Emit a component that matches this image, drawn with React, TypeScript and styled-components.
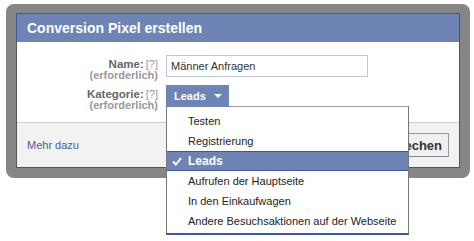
import React from 'react';
import styled, { createGlobalStyle } from 'styled-components';

const Global = createGlobalStyle`
  html, body { margin: 0; padding: 0; background: #fff; }
  body {
    font-family: "Liberation Sans", Arial, sans-serif;
    width: 474px;
    height: 241px;
    overflow: hidden;
  }
`;

const Page = styled.div`
  padding: 4px 0 0 6px;
`;

const Frame = styled.div`
  width: 464px;
  box-sizing: border-box;
  padding: 9px 10px 10px 10px;
  background: #868686;
  border-radius: 8px;
`;

const Dialog = styled.div`
  background: #fff;
  border: 1px solid #555;
  border-top: none;
`;

const Header = styled.div`
  height: 29px;
  box-sizing: border-box;
  background: #6d84b4;
  border: 1px solid #3b5998;
  border-bottom: none;
  margin: 0 -1px;
  padding: 0 0 0 10px;
  display: flex;
  align-items: center;
  color: #fff;
  font-weight: bold;
  font-size: 14px;
`;

const Body = styled.div`
  display: grid;
  grid-template-columns: 141px 1fr;
  column-gap: 8px;
  row-gap: 4px;
  padding: 13px 0 11px 0;
`;

const Label = styled.div`
  text-align: right;
  padding-top: 3px;
`;

const LabelMain = styled.div`
  font-size: 11.5px;
  line-height: 12px;
  font-weight: bold;
  color: #666;
`;

const Help = styled.span`
  font-weight: normal;
  font-size: 11px;
  color: #999;
  margin-left: 2px;
`;

const Required = styled.div`
  font-size: 11px;
  line-height: 11px;
  font-weight: bold;
  color: #999;
`;

const Field = styled.div`
  display: flex;
  align-items: flex-start;
`;

const TextInput = styled.input`
  width: 202px;
  height: 22px;
  box-sizing: border-box;
  border: 1px solid #bdc7d8;
  padding: 0 4px;
  font-family: inherit;
  font-size: 11px;
  color: #333;
  outline: none;
`;

const SelectWrap = styled.div`
  position: relative;
`;

const SelectButton = styled.div`
  position: relative;
  z-index: 2;
  height: 22px;
  box-sizing: border-box;
  width: 63px;
  padding: 0 0 0 8px;
  background: #6d84b4;
  color: #fff;
  font-size: 11px;
  font-weight: bold;
  display: flex;
  align-items: center;
  gap: 8px;
`;

const Arrow = styled.span`
  width: 0;
  height: 0;
  border-left: 4px solid transparent;
  border-right: 4px solid transparent;
  border-top: 4px solid #fff;
`;

const Menu = styled.div`
  position: absolute;
  z-index: 1;
  top: 100%;
  margin-top: -1px;
  left: 0;
  width: 243px;
  box-sizing: border-box;
  background: #fff;
  border: 1px solid #777;
  border-top-color: #999;
  border-bottom: 2px solid #3b5998;
  padding: 4px 0 2px 0;
`;

const Item = styled.div<{ $active?: boolean }>`
  position: relative;
  height: 20px;
  box-sizing: border-box;
  padding-left: 21px;
  display: flex;
  align-items: center;
  font-size: ${(p) => (p.$active ? '12px' : '11px')};
  font-weight: ${(p) => (p.$active ? 'bold' : 'normal')};
  color: ${(p) => (p.$active ? '#fff' : '#222')};
  background: ${(p) => (p.$active ? '#6d84b4' : 'transparent')};
  border-top: 1px solid ${(p) => (p.$active ? '#3b5998' : 'transparent')};
  border-bottom: 1px solid ${(p) => (p.$active ? '#3b5998' : 'transparent')};
  white-space: nowrap;
`;

const Check = styled.svg`
  position: absolute;
  left: 5px;
  top: 5px;
`;

const Footer = styled.div`
  background: #f2f2f2;
  border-top: 1px solid #ccc;
  padding: 10px;
  display: flex;
  align-items: center;
  justify-content: space-between;
`;

const Link = styled.a`
  font-size: 11px;
  color: #4b5f8e;
  text-decoration: none;
`;

const Button = styled.button`
  height: 24px;
  box-sizing: border-box;
  padding: 0 6px;
  background: #f0f0f0;
  border: 1px solid #999;
  border-bottom-color: #888;
  font-family: inherit;
  font-size: 13px;
  font-weight: bold;
  color: #333;
`;

const items = [
  'Testen',
  'Registrierung',
  'Leads',
  'Aufrufen der Hauptseite',
  'In den Einkaufwagen',
  'Andere Besuchsaktionen auf der Webseite',
];

export default function App() {
  return (
    <>
      <Global />
      <Page>
        <Frame>
          <Dialog>
            <Header>Conversion Pixel erstellen</Header>
            <Body>
              <Label>
                <LabelMain>
                  Name:<Help>[?]</Help>
                </LabelMain>
                <Required>(erforderlich)</Required>
              </Label>
              <Field>
                <TextInput defaultValue="Männer Anfragen" />
              </Field>
              <Label>
                <LabelMain>
                  Kategorie:<Help>[?]</Help>
                </LabelMain>
                <Required>(erforderlich)</Required>
              </Label>
              <Field>
                <SelectWrap>
                  <SelectButton>
                    Leads <Arrow />
                  </SelectButton>
                  <Menu>
                    {items.map((it) => (
                      <Item key={it} $active={it === 'Leads'}>
                        {it === 'Leads' && (
                          <Check width="10" height="9" viewBox="0 0 10 9">
                            <path d="M1 4.5 L3.8 7.5 L9 1" stroke="#fff" strokeWidth="2" fill="none" />
                          </Check>
                        )}
                        {it}
                      </Item>
                    ))}
                  </Menu>
                </SelectWrap>
              </Field>
            </Body>
            <Footer>
              <Link href="#">Mehr dazu</Link>
              <Button>Abbrechen</Button>
            </Footer>
          </Dialog>
        </Frame>
      </Page>
    </>
  );
}
